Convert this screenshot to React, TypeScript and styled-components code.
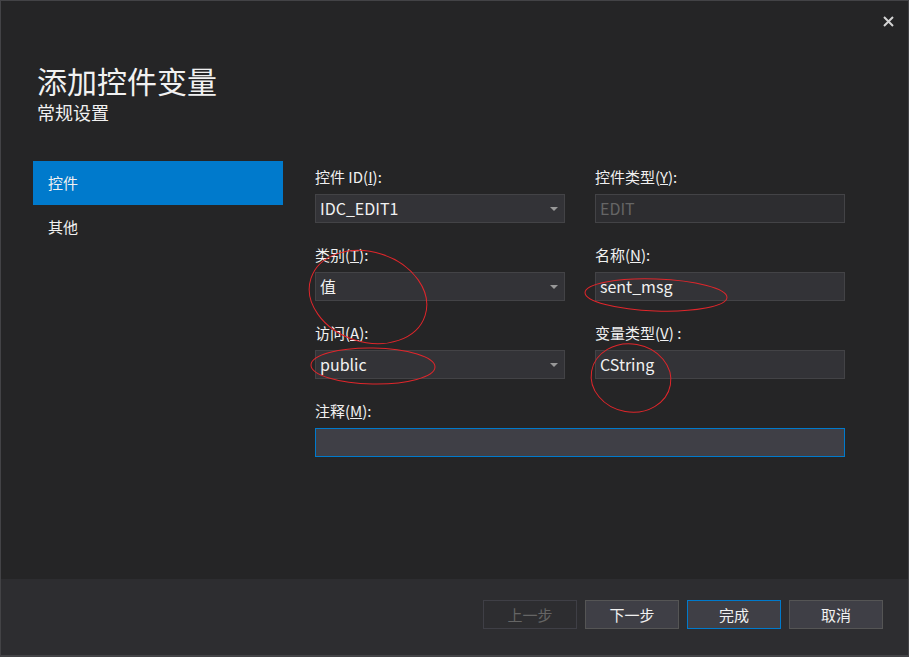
import React from 'react';
import styled, { createGlobalStyle } from 'styled-components';

const GlobalStyle = createGlobalStyle`
  html, body {
    margin: 0;
    padding: 0;
    background: #252526;
  }
  * {
    box-sizing: border-box;
  }
`;

const FONT = `"Segoe UI", "Noto Sans CJK SC", "Noto Sans", sans-serif`;

const Dialog = styled.div`
  position: relative;
  width: 909px;
  height: 657px;
  border: 1px solid #434346;
  border-bottom-width: 2px;
  background: #252526;
  color: #f1f1f1;
  font-family: ${FONT};
  display: flex;
  flex-direction: column;
  overflow: hidden;
`;

const TitleBar = styled.div`
  height: 42px;
  display: flex;
  justify-content: flex-end;
  align-items: flex-start;
  padding: 5px 5px 0 0;
`;

const CloseButton = styled.button`
  width: 30px;
  height: 30px;
  border: none;
  background: transparent;
  padding: 0;
  display: flex;
  align-items: center;
  justify-content: center;
  cursor: pointer;
`;

const Header = styled.div`
  padding-left: 36px;
`;

const Title = styled.h1`
  margin: 20px 0 0;
  font-size: 30px;
  font-weight: 400;
  line-height: 34px;
`;

const SubTitle = styled.h2`
  margin: 3px 0 0;
  font-size: 18px;
  font-weight: 400;
  line-height: 24px;
`;

const Body = styled.div`
  flex: 1;
  display: flex;
  gap: 32px;
  padding: 37px 0 0 32px;
`;

const Sidebar = styled.div`
  width: 250px;
  display: flex;
  flex-direction: column;
`;

const NavItem = styled.div<{ $active?: boolean }>`
  height: 44px;
  line-height: 44px;
  padding-left: 15px;
  font-size: 15px;
  background: ${(p) => (p.$active ? '#007acc' : 'transparent')};
  color: #f1f1f1;
`;

const Form = styled.div`
  display: grid;
  grid-template-columns: 250px 250px;
  column-gap: 30px;
  align-content: start;
  padding-top: 6px;
`;

const Field = styled.div<{ $wide?: boolean }>`
  grid-column: ${(p) => (p.$wide ? '1 / span 2' : 'auto')};
  display: flex;
  flex-direction: column;
  margin-bottom: 22px;
`;

const Label = styled.label`
  font-size: 15px;
  line-height: 20px;
  margin-bottom: 7px;
  color: #f1f1f1;
`;

const InputBox = styled.div<{ $disabled?: boolean; $focused?: boolean }>`
  height: 29px;
  border: 1px solid ${(p) => (p.$focused ? '#007acc' : '#434346')};
  background: ${(p) => (p.$disabled ? '#2d2d30' : p.$focused ? '#3f3f46' : '#333337')};
  color: ${(p) => (p.$disabled ? '#656565' : '#f1f1f1')};
  font-size: 16px;
  line-height: 27px;
  padding-left: 4px;
  display: flex;
  align-items: center;
  justify-content: space-between;
`;

const Arrow = styled.span`
  width: 0;
  height: 0;
  margin-right: 6px;
  border-left: 4px solid transparent;
  border-right: 4px solid transparent;
  border-top: 4px solid #999999;
`;

const Footer = styled.div`
  height: 76px;
  background: #2d2d30;
  display: flex;
  justify-content: flex-end;
  align-items: flex-start;
  gap: 8px;
  padding: 21px 25px 0 0;
`;

const Button = styled.button<{ $primary?: boolean }>`
  width: 94px;
  height: 29px;
  font-family: ${FONT};
  font-size: 15px;
  color: #f1f1f1;
  background: #3f3f46;
  border: 1px solid ${(p) => (p.$primary ? '#007acc' : '#555555')};
  padding: 0;
  &:disabled {
    color: #656565;
    background: #2d2d30;
    border-color: #3f3f46;
  }
`;

const Marks = styled.svg`
  position: absolute;
  left: 0;
  top: 0;
  pointer-events: none;
`;

const fields = [
  { label: <>控件 ID(<u>I</u>):</>, value: 'IDC_EDIT1', combo: true },
  { label: <>控件类型(<u>Y</u>):</>, value: 'EDIT', disabled: true },
  { label: <>类别(<u>T</u>):</>, value: '值', combo: true },
  { label: <>名称(<u>N</u>):</>, value: 'sent_msg' },
  { label: <>访问(<u>A</u>):</>, value: 'public', combo: true },
  { label: <>变量类型(<u>V</u>) :</>, value: 'CString' },
];

const App: React.FC = () => {
  return (
    <Dialog>
      <GlobalStyle />
      <TitleBar>
        <CloseButton aria-label="close">
          <svg width="11" height="11" viewBox="0 0 11 11">
            <path d="M1 1 L10 10 M10 1 L1 10" stroke="#d4d4d4" strokeWidth="2" />
          </svg>
        </CloseButton>
      </TitleBar>
      <Header>
        <Title>添加控件变量</Title>
        <SubTitle>常规设置</SubTitle>
      </Header>
      <Body>
        <Sidebar>
          <NavItem $active>控件</NavItem>
          <NavItem>其他</NavItem>
        </Sidebar>
        <Form>
          {fields.map((f, i) => (
            <Field key={i}>
              <Label>{f.label}</Label>
              <InputBox $disabled={f.disabled}>
                <span>{f.value}</span>
                {f.combo && <Arrow />}
              </InputBox>
            </Field>
          ))}
          <Field $wide>
            <Label>注释(<u>M</u>):</Label>
            <InputBox $focused />
          </Field>
        </Form>
      </Body>
      <Footer>
        <Button disabled>上一步</Button>
        <Button>下一步</Button>
        <Button $primary>完成</Button>
        <Button>取消</Button>
      </Footer>
      <Marks width="909" height="657">
        <g fill="none" stroke="#e0262b" strokeWidth="1">
          <ellipse cx="367" cy="296" rx="60" ry="45" transform="rotate(18 367 296)" />
          <ellipse cx="655" cy="294" rx="71" ry="16" transform="rotate(2 655 294)" />
          <ellipse cx="372" cy="365" rx="62" ry="18" transform="rotate(1 372 365)" />
          <ellipse cx="630" cy="377" rx="40" ry="34" transform="rotate(10 630 377)" />
        </g>
      </Marks>
    </Dialog>
  );
};

export default App;
